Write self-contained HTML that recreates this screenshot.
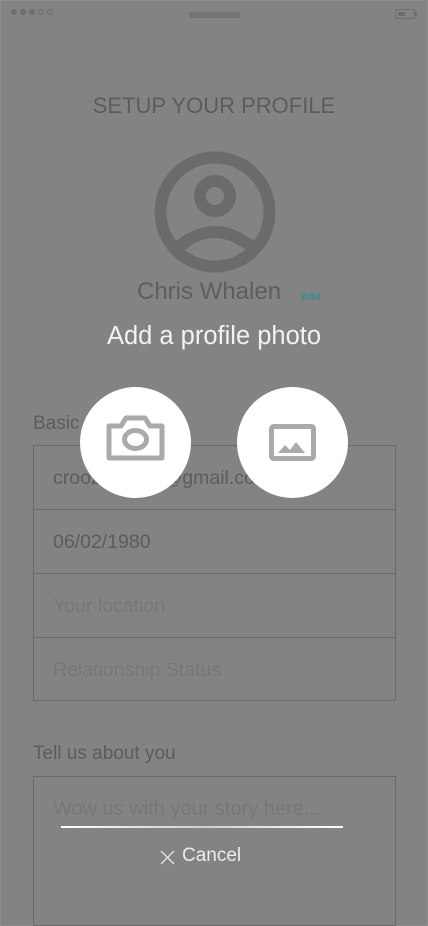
<!DOCTYPE html>
<html><head><meta charset="utf-8"><style>
html,body{margin:0;padding:0}
body{width:428px;height:926px;background:#838383;position:relative;overflow:hidden;font-family:"Liberation Sans",sans-serif;}
.abs{position:absolute}
.dot{position:absolute;top:9px;width:6px;height:6px;border-radius:50%;box-sizing:border-box}
.f{position:absolute;left:33px;width:363px;height:64px;box-sizing:border-box;border:1px solid #6a6a6a;border-bottom:none}
.f span{position:absolute;left:19px;top:21px;font-size:19.5px;color:#5c5c5c}
.ph{color:#777 !important}
</style></head><body>
<div class="abs" style="left:0;top:0;width:426px;height:924px;border:1px solid #8d8d8d"></div>
<div class="dot" style="left:11px;background:#6e6e6e"></div>
<div class="dot" style="left:20px;background:#6e6e6e"></div>
<div class="dot" style="left:29px;background:#6e6e6e"></div>
<div class="dot" style="left:38px;border:1px solid #6e6e6e"></div>
<div class="dot" style="left:47px;border:1px solid #6e6e6e"></div>
<div class="abs" style="left:189px;top:12px;width:51px;height:6px;background:#737373;border-radius:1px"></div>
<div class="abs" style="left:395px;top:9px;width:20px;height:10px;border:1px solid #6e6e6e;box-sizing:border-box;border-radius:1px"></div>
<div class="abs" style="left:415px;top:12px;width:2px;height:4px;background:#6e6e6e"></div>
<div class="abs" style="left:398px;top:12px;width:7px;height:4px;background:#6e6e6e"></div>

<div class="abs" style="left:0;width:428px;top:93px;text-align:center;font-size:22px;color:#5c5c5c">SETUP YOUR PROFILE</div>
<svg class="abs" style="left:154px;top:151px" width="122" height="122" viewBox="0 0 122 122">
<circle cx="61" cy="61" r="54.5" fill="none" stroke="#6b6b6b" stroke-width="12"/>
<circle cx="61" cy="45" r="15" fill="none" stroke="#6b6b6b" stroke-width="12"/>
<path d="M22 98 Q61 64 100 98" fill="none" stroke="#6b6b6b" stroke-width="12"/>
</svg>
<div class="abs" style="left:137px;top:278px;font-size:24px;color:#5e5e5e">Chris Whalen</div>
<div class="abs" style="left:301px;top:291px;font-size:11px;font-weight:bold;color:#3c8a8f">edit</div>
<div class="abs" style="left:0;width:428px;top:322px;text-align:center;font-size:25.5px;color:#f2f2f2">Add a profile photo</div>

<div class="abs" style="left:33px;top:413px;font-size:19px;color:#5c5c5c">Basic</div>
<div class="f" style="top:445px"><span>croozwhalen@gmail.com</span></div>
<div class="f" style="top:509px"><span>06/02/1980</span></div>
<div class="f" style="top:573px"><span class="ph">Your location</span></div>
<div class="f" style="top:637px;height:64px;border-bottom:1px solid #6a6a6a"><span class="ph">Relationship Status</span></div>

<div class="abs" style="left:80px;top:387px;width:111px;height:111px;border-radius:50%;background:#fff"></div>
<svg class="abs" style="left:106px;top:415px" width="59" height="46" viewBox="0 0 59 46">
<path d="M3 11 H15 L20 3 H39 L44 11 H56 V43 H3 Z" fill="none" stroke="#aaa" stroke-width="5" stroke-linejoin="round"/>
<ellipse cx="29.5" cy="24.5" rx="11" ry="9" fill="none" stroke="#aaa" stroke-width="5"/>
</svg>
<div class="abs" style="left:237px;top:387px;width:111px;height:111px;border-radius:50%;background:#fff"></div>
<svg class="abs" style="left:269px;top:424px" width="47" height="37" viewBox="0 0 47 37">
<rect x="2.5" y="2.5" width="42" height="32" rx="2" fill="none" stroke="#aaa" stroke-width="5"/>
<path d="M9 29 L16 21 L21 26 L27 18 L36 29 Z" fill="#aaa"/>
</svg>

<div class="abs" style="left:33px;top:743px;font-size:19px;color:#5c5c5c">Tell us about you</div>
<div class="abs" style="left:33px;top:776px;width:363px;height:150px;box-sizing:border-box;border:1px solid #6a6a6a"></div>
<div class="abs" style="left:53px;top:798px;font-size:20px;color:#777">Wow us with your story here...</div>
<div class="abs" style="left:61px;top:826px;width:282px;height:2px;background:linear-gradient(90deg,#fff,#cfcfcf 50%,#fff)"></div>
<svg class="abs" style="left:160px;top:850px" width="15" height="15" viewBox="0 0 15 15"><path d="M1 1 L14 14 M14 1 L1 14" stroke="#e6e6e6" stroke-width="1.3"/></svg>
<div class="abs" style="left:182px;top:845px;font-size:19px;color:#ececec">Cancel</div>
</body></html>
